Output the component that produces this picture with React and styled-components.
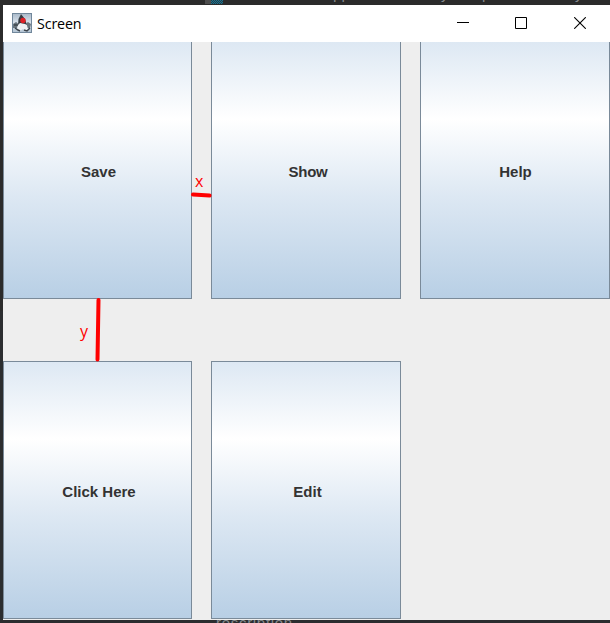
import React from "react";
import styled, { createGlobalStyle } from "styled-components";

const Global = createGlobalStyle`
  * { box-sizing: border-box; }
  body { margin: 0; overflow: hidden; background: #2b2b2b; }
`;

const Desktop = styled.main`
  position: relative;
  width: 610px;
  height: 623px;
  padding: 5px 0 3px 3px;
  overflow: hidden;
  background: linear-gradient(#2b2b2b 50%, #2b2d2f 50%);
  font-family: "Liberation Sans", Arial, sans-serif;
`;

const Window = styled.section`
  width: 607px;
  height: 615px;
  display: flex;
  flex-direction: column;
  background: #eeeeee;
`;

const TitleBar = styled.header`
  height: 37px;
  flex: none;
  display: flex;
  align-items: center;
  padding-left: 9px;
  background: #fff;
  > svg { margin-top: -2px; }
`;

const Title = styled.h1`
  flex: 1;
  margin: 0 0 0 5px;
  font: 400 14.3px/20px "Open Sans", "Noto Sans", sans-serif;
  letter-spacing: -0.15px;
  color: #000;
`;

const Controls = styled.div`
  display: flex;
  width: 176px;
  height: 37px;
`;

const Control = styled.button`
  width: ${(p) => p.$width}px;
  padding: 0 0 2px;
  border: 0;
  background: none;
  display: flex;
  align-items: center;
  justify-content: center;
  svg { display: block; }
`;

const Grid = styled.div`
  display: grid;
  grid-template-columns: 189px 190px 190px;
  grid-template-rows: 258px 258px;
  column-gap: 19px;
  row-gap: 62px;
  margin-top: -1px;
  clip-path: inset(1px 0 0 0);
`;

const MetalButton = styled.button`
  padding: 4px 0 0 2px;
  border: 1px solid #7a8a99;
  border-radius: 0;
  background: linear-gradient(#dde8f3 0%, #ffffff 30%, #dde8f3 60%, #b8cfe5 100%);
  color: #333;
  font: 700 15px/18px "Liberation Sans", Arial, sans-serif;
  &:nth-child(2) { padding-left: 4px; letter-spacing: -0.3px; }
  &:nth-child(3) { padding-left: 1px; }
  &:nth-child(4) { padding-left: 3px; }
  &:nth-child(5) { padding-left: 3px; }
`;

const Annotation = styled.svg`
  position: absolute;
  left: 0;
  top: 0;
  pointer-events: none;
  text { font: 400 16px "Open Sans", sans-serif; fill: #ff0000; }
  line { stroke: #ff0000; stroke-width: 4; stroke-linecap: round; }
`;

const EditorEdge = styled.div`
  position: absolute;
  left: 0;
  width: 610px;
  height: ${(p) => p.$height}px;
  ${(p) => p.$side}: 0;
  overflow: hidden;
`;

const EditorText = styled.span`
  position: absolute;
  left: ${(p) => p.$x}px;
  top: ${(p) => p.$y}px;
  font: 15px/18px "Liberation Sans", sans-serif;
  letter-spacing: ${(p) => p.$spacing || 0}px;
  color: #85898c;
  white-space: nowrap;
`;

const Thumb = styled.i`
  position: absolute;
  left: 205px;
  top: 0;
  width: 6px;
  height: 4px;
  background: #4d4d4d;
`;

const Checker = styled.i`
  position: absolute;
  left: 211px;
  top: 0;
  width: 12px;
  height: 4px;
  background: repeating-conic-gradient(#187391 0 25%, #243c46 0 50%) 0 0 / 2px 2px;
`;

function DukeIcon() {
  return (
    <svg width="20" height="20" viewBox="0 0 20 20">
      <defs>
        <linearGradient id="duke-bg" x2="0" y2="1">
          <stop stopColor="#a9b9c9" />
          <stop offset=".5" stopColor="#dbe4ed" />
          <stop offset="1" stopColor="#b1c2d2" />
        </linearGradient>
      </defs>
      <rect x=".5" y=".5" width="19" height="19" fill="url(#duke-bg)" stroke="#71879b" />
      <path d="M1 11 4 9 7 11 5 15 1 15zM13 11 16 9 19 11 18 15 14 15z" fill="#69747d" />
      <path d="M9 1 6 10 5 17 8 18 11 16 14 18 16 16 14 9z" fill="#eef1f4" />
      <path d="M9 1 6.5 6 6 12 8 10 13 11 15 12 13 6z" fill="#343b42" />
      <circle cx="11" cy="7.5" r="2.7" fill="#df2026" />
      <path d="M3 15 6 17 8 18M12 17 15 18 18 15M2 12H6" fill="none" stroke="#3c444b" strokeWidth="1.5" />
    </svg>
  );
}

const labels = ["Save", "Show", "Help", "Click Here", "Edit"];

export default function App() {
  return (
    <>
      <Global />
      <Desktop>
        <EditorEdge $side="top" $height={5}>
          <Thumb />
          <Checker />
          <EditorText $x={334} $y={-15}>Д</EditorText>
          <EditorText $x={441} $y={-15}>y</EditorText>
          <EditorText $x={482} $y={-15}>p</EditorText>
          <EditorText $x={575} $y={-15}>y</EditorText>
        </EditorEdge>
        <Window>
          <TitleBar>
            <DukeIcon />
            <Title>Screen</Title>
            <Controls>
              <Control $width={58} aria-label="Minimize">
                <svg width="12" height="12"><path d="M0 5.5H12" stroke="#000" /></svg>
              </Control>
              <Control $width={58} aria-label="Maximize">
                <svg width="12" height="12"><path d="M.5.5h11v11H.5z" fill="none" stroke="#000" /></svg>
              </Control>
              <Control $width={60} aria-label="Close">
                <svg width="12" height="12"><path d="M.2.2 11.8 11.8M11.8.2.2 11.8" stroke="#000" strokeWidth="1.1" /></svg>
              </Control>
            </Controls>
          </TitleBar>
          <Grid>
            {labels.map((label) => <MetalButton key={label}>{label}</MetalButton>)}
          </Grid>
        </Window>
        <EditorEdge $side="bottom" $height={3}>
          <EditorText $x={216} $y={-6} $spacing={0.7}>rescription</EditorText>
        </EditorEdge>
        <Annotation width="610" height="623">
          <text x="195" y="187">x</text>
          <line x1="193" y1="194.6" x2="209.5" y2="195.6" />
          <text x="80" y="337">y</text>
          <line x1="98.5" y1="300" x2="97.5" y2="359.5" />
        </Annotation>
      </Desktop>
    </>
  );
}
